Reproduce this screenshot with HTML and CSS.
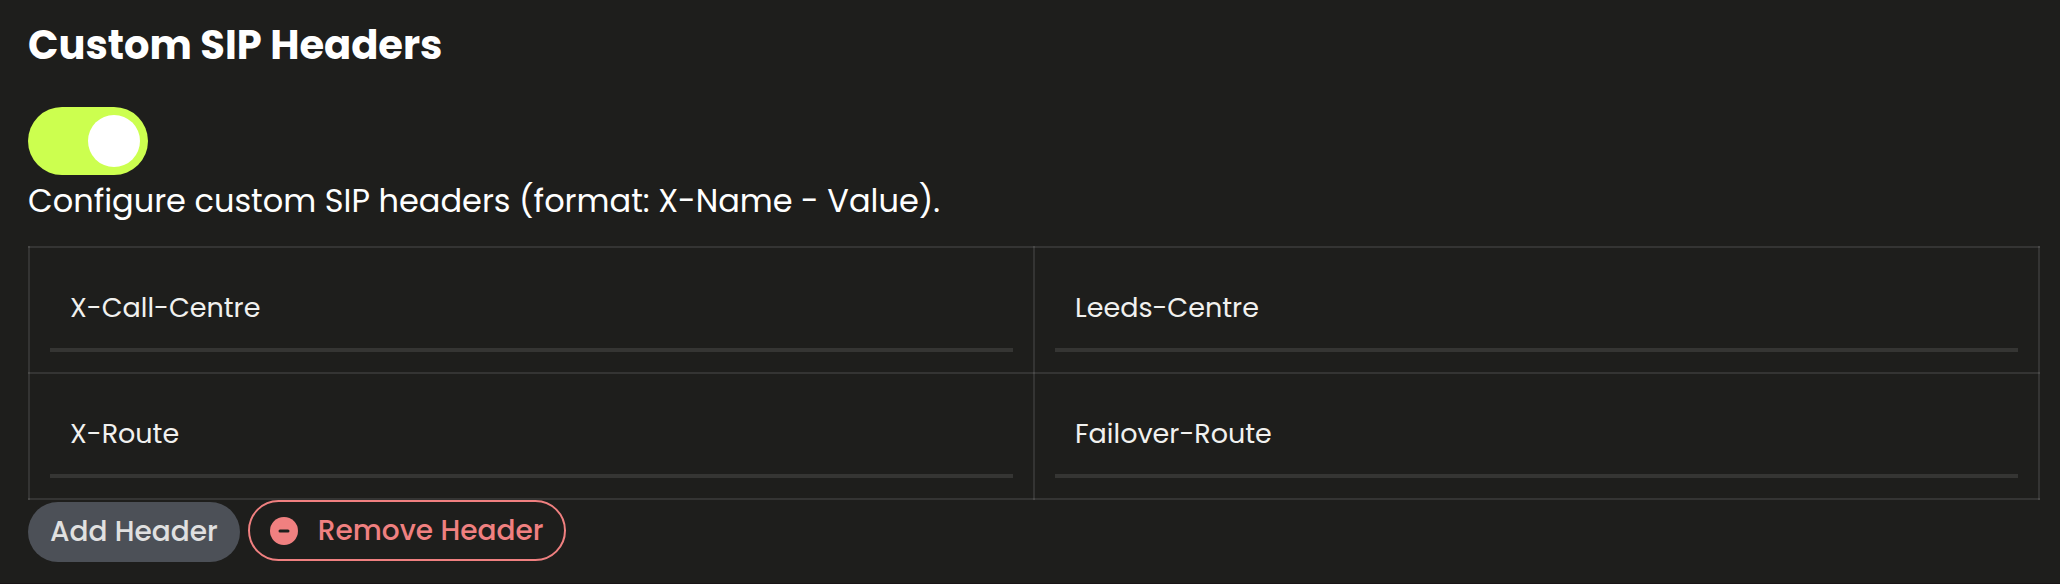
FILE: index.html
```html
<!DOCTYPE html>
<html lang="en">
<head>
<meta charset="utf-8">
<title>Custom SIP Headers</title>
<link rel="stylesheet" href="styles.css">
</head>
<body>
<main class="panel">
  <h1 class="title" id="title">Custom SIP Headers</h1>
  <input class="switch" type="checkbox" role="switch" aria-labelledby="title" aria-describedby="hint" checked>
  <p class="hint" id="hint">Configure custom SIP headers (format: X-Name - Value).</p>
  <table class="headers" aria-labelledby="title">
    <tbody>
      <tr>
        <td><input class="field" type="text" aria-label="Header 1 name" value="X-Call-Centre"></td>
        <td><input class="field" type="text" aria-label="Header 1 value" value="Leeds-Centre"></td>
      </tr>
      <tr>
        <td><input class="field" type="text" aria-label="Header 2 name" value="X-Route"></td>
        <td><input class="field" type="text" aria-label="Header 2 value" value="Failover-Route"></td>
      </tr>
    </tbody>
  </table>
  <div class="actions">
    <button class="btn btn-add" type="button">Add Header</button>
    <button class="btn btn-remove" type="button">
      <svg class="icon" viewBox="0 0 28 28" aria-hidden="true">
        <circle cx="14" cy="14" r="14" fill="currentColor"/>
        <path d="M10 14h8" stroke="#1e1e1c" stroke-width="3" stroke-linecap="round"/>
      </svg>
      Remove Header
    </button>
  </div>
</main>
</body>
</html>
```
FILE: styles.css
```css
* {
  box-sizing: border-box;
}

body {
  margin: 0;
  background: #1e1e1c;
  color: #fff;
  font-family: Poppins, Inter, "Open Sans", sans-serif;
}

.panel {
  padding: 16px 20px 21px 28px;
  border-bottom: 1px solid #181416;
}

.title {
  margin: 0 0 32px;
  font-size: 40px;
  font-weight: 700;
  line-height: 59px;
}

.switch {
  appearance: none;
  display: flex;
  justify-content: flex-end;
  width: 120px;
  height: 68px;
  margin: 0;
  padding: 8px;
  border-radius: 34px;
  background: #ccff4f;
}

.switch::before {
  content: "";
  width: 52px;
  height: 52px;
  border-radius: 50%;
  background: #fff;
}

.switch:not(:checked) {
  justify-content: flex-start;
  background: #4c5057;
}

.hint {
  margin: 0 0 19px;
  font-size: 32px;
  line-height: 52px;
}

.headers {
  width: 100%;
  table-layout: fixed;
  border-collapse: collapse;
}

.headers td {
  padding: 20px;
  border: 2px solid rgba(255, 255, 255, 0.1);
}

.field {
  display: block;
  width: 100%;
  height: 84px;
  padding: 0 20px;
  border: 0;
  border-bottom: 4px solid #353533;
  border-radius: 0;
  background: transparent;
  color: #f1f1ef;
  font: inherit;
  font-size: 27px;
}

.actions {
  display: flex;
  align-items: flex-start;
  gap: 8px;
}

.btn {
  display: flex;
  align-items: center;
  height: 60px;
  border: 0;
  border-radius: 30px;
  font: inherit;
  font-size: 28px;
  font-weight: 500;
}

.btn-add {
  margin-top: 2px;
  padding: 0 22px;
  background: #4c5057;
  color: #e0e0e0;
}

.btn-remove {
  gap: 20px;
  height: 61px;
  padding: 0 21px 0 20px;
  border: 2px solid #f08080;
  border-radius: 31px;
  background: transparent;
  color: #f08080;
}

.icon {
  width: 28px;
  height: 28px;
}
```
